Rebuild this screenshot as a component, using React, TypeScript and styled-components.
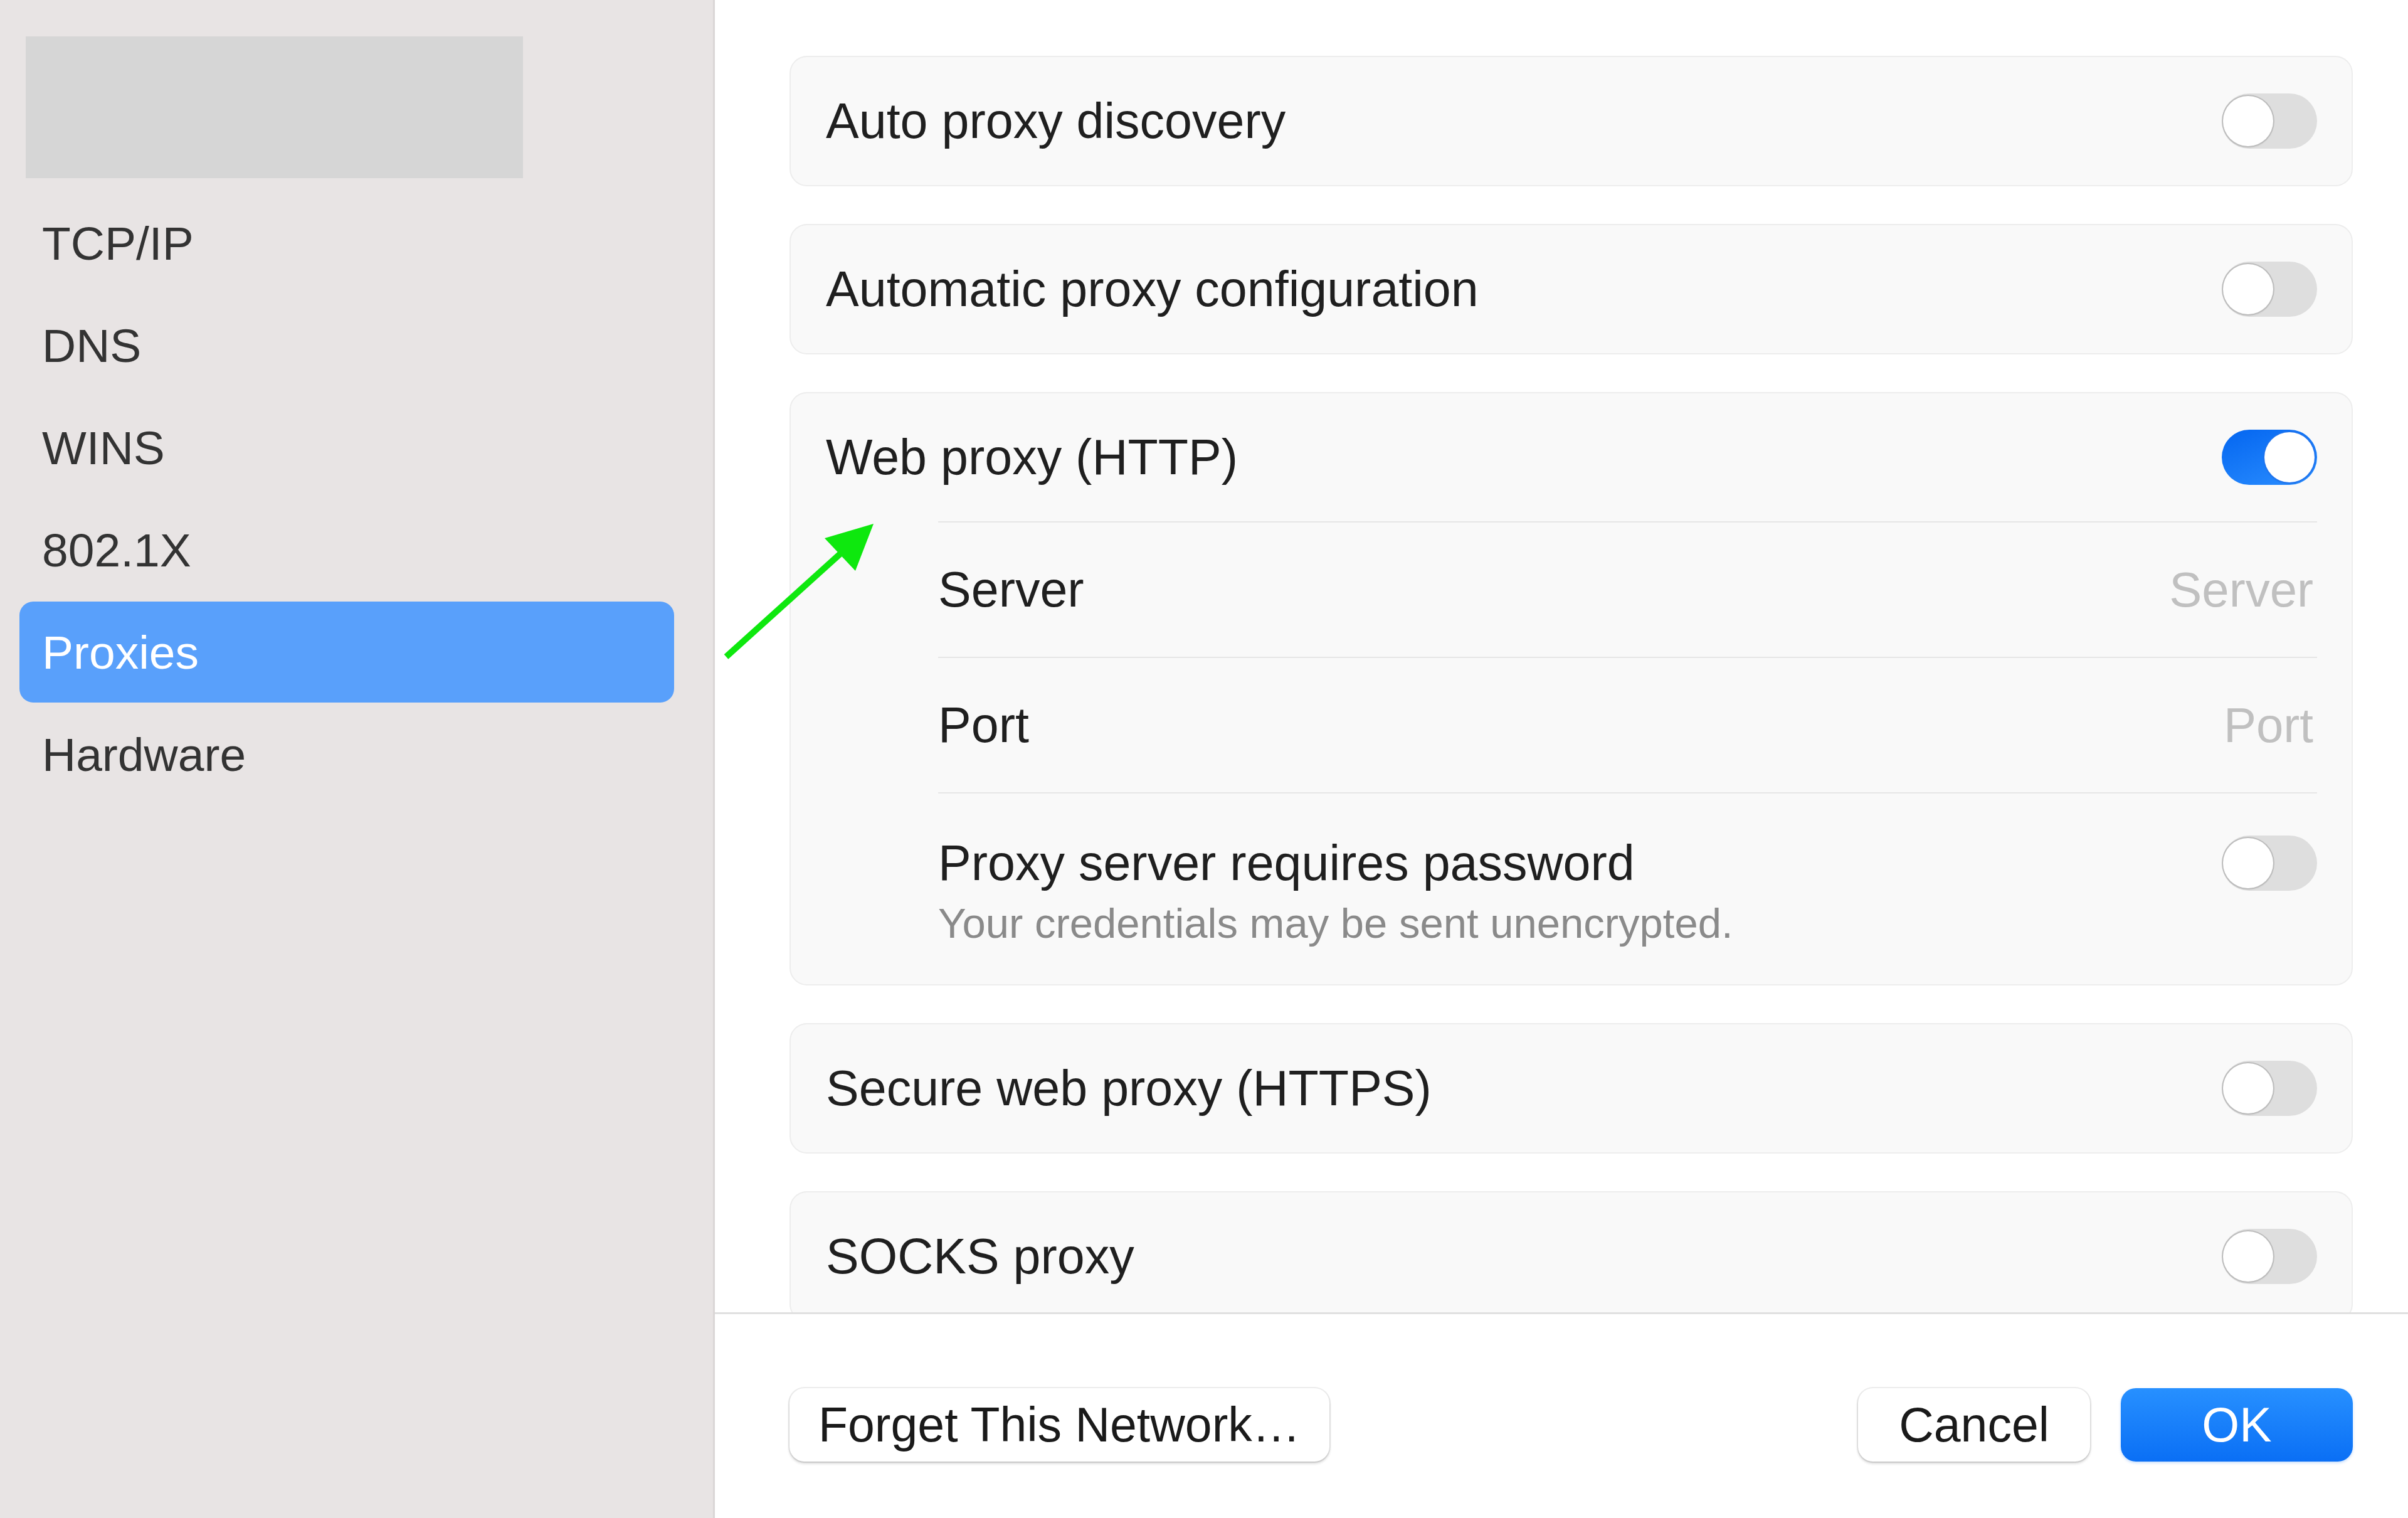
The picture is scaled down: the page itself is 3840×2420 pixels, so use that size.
import { FunctionComponent, ReactNode } from "react";
import styled, { createGlobalStyle } from "styled-components";

const GlobalStyle = createGlobalStyle`
  html, body {
    margin: 0;
    padding: 0;
    background: #ffffff;
  }

  body {
    font-family: "Liberation Sans", Arial, sans-serif;
    -webkit-font-smoothing: antialiased;
  }

  #root {
    height: 100vh;
  }
`;

const Window = styled.div`
  position: relative;
  display: flex;
  height: 100vh;
  overflow: hidden;
`;

/* ---------- sidebar ---------- */

const Sidebar = styled.nav`
  width: 1137px;
  flex-shrink: 0;
  background: #e8e4e4;
  border-right: 3px solid #dad6d6;
  padding-top: 58px;
  box-sizing: content-box;
`;

const NetworkBadge = styled.div`
  width: 793px;
  height: 226px;
  margin: 0 0 23px 41px;
  background: #d6d6d6;
`;

const NavItem = styled.div<{ $active?: boolean }>`
  height: 161px;
  margin: 0 62px 2px 31px;
  padding-left: 36px;
  display: flex;
  align-items: center;
  border-radius: 22px;
  font-size: 75px;
  color: ${p => (p.$active ? "#ffffff" : "#333333")};
  background: ${p => (p.$active ? "#59a0fb" : "transparent")};
`;

/* ---------- main panel ---------- */

const Main = styled.main`
  flex: 1;
  display: flex;
  flex-direction: column;
  min-width: 0;
  background: #ffffff;
`;

const Scroller = styled.div`
  flex: 1;
  overflow: hidden;
  padding: 89px 88px 0 119px;
  display: flex;
  flex-direction: column;
  gap: 60px;
`;

const Card = styled.section`
  flex-shrink: 0;
  background: #f9f9f9;
  border: 2px solid #ededed;
  border-radius: 28px;
  padding: 0 55px 0 56px;
`;

const Row = styled.div`
  height: 204px;
  display: flex;
  align-items: center;
  justify-content: space-between;
`;

// rows nested under an enabled proxy, each with a hairline above
const FieldLine = styled.div`
  height: 214px;
  margin-left: 179px;
  display: flex;
  align-items: center;
  justify-content: space-between;
  border-top: 2px solid #e6e6e6;
`;

const TallRow = styled.div`
  display: flex;
  align-items: flex-start;
  justify-content: space-between;
  margin-left: 179px;
  padding: 64px 0 57px;
  border-top: 2px solid #e6e6e6;
`;

const Label = styled.div`
  font-size: 79px;
  line-height: 94px;
  color: #1f1f1f;
  white-space: nowrap;
`;

const Hint = styled.div`
  margin-top: 9px;
  font-size: 67px;
  line-height: 80px;
  color: #8a8a8a;
`;

const Placeholder = styled.span`
  font-size: 78px;
  color: #c0c0c0;
  margin-right: 6px;
`;

const Track = styled.div<{ $on?: boolean }>`
  position: relative;
  flex-shrink: 0;
  width: 152px;
  height: 88px;
  border-radius: 44px;
  background: ${p =>
    p.$on ? "linear-gradient(160deg, #0466f0 0%, #2a8dff 100%)" : "#dedede"};
`;

const Knob = styled.div<{ $on?: boolean }>`
  position: absolute;
  top: 4px;
  left: ${p => (p.$on ? "68px" : "2px")};
  width: 80px;
  height: 80px;
  border-radius: 50%;
  background: #ffffff;
  box-shadow: 0 0 0 2px ${p => (p.$on ? "#1f74ee" : "#bcbcbc")},
    0 2px 3px rgba(0, 0, 0, 0.12);
`;

const ToggleSlot = styled.div`
  padding-top: 3px;
`;

const Footer = styled.footer`
  height: 328px;
  flex-shrink: 0;
  box-sizing: border-box;
  border-top: 3px solid #e0e0e0;
  padding: 118px 88px 0 119px;
  display: flex;
  justify-content: space-between;
  align-items: flex-start;
`;

const ButtonGroup = styled.div`
  display: flex;
  gap: 49px;
`;

const Button = styled.button<{ $primary?: boolean }>`
  height: 117px;
  min-width: 370px;
  padding: 0 46px;
  border: none;
  border-radius: 24px;
  font-family: "Liberation Sans", Arial, sans-serif;
  font-size: 77px;
  color: ${p => (p.$primary ? "#ffffff" : "#1a1a1a")};
  background: ${p =>
    p.$primary ? "linear-gradient(180deg, #2790ff 0%, #0a6ff5 100%)" : "#ffffff"};
  box-shadow: ${p =>
    p.$primary
      ? "0 2px 4px rgba(10, 111, 245, 0.25)"
      : "0 0 0 2px rgba(0, 0, 0, 0.07), 0 3px 4px rgba(0, 0, 0, 0.18)"};
`;

const Pointer = styled.svg`
  position: absolute;
  left: 1150px;
  top: 825px;
  width: 255px;
  height: 230px;
  pointer-events: none;
`;

/* ---------- pieces ---------- */

const Toggle: FunctionComponent<{ on?: boolean }> = ({ on = false }) => (
  <Track $on={on}>
    <Knob $on={on} />
  </Track>
);

const SimpleCard: FunctionComponent<{ title: string; on?: boolean }> = ({ title, on }) => (
  <Card>
    <Row>
      <Label>{title}</Label>
      <Toggle on={on} />
    </Row>
  </Card>
);

const FieldRow: FunctionComponent<{ label: string; children: ReactNode }> = ({ label, children }) => (
  <FieldLine>
    <Label>{label}</Label>
    {children}
  </FieldLine>
);

const navItems = ["TCP/IP", "DNS", "WINS", "802.1X", "Proxies", "Hardware"];

export default function App() {
  return (
    <>
      <GlobalStyle />
      <Window>
        <Sidebar>
          <NetworkBadge />
          {navItems.map(item => (
            <NavItem key={item} $active={item === "Proxies"}>
              {item}
            </NavItem>
          ))}
        </Sidebar>

        <Main>
          <Scroller>
            <SimpleCard title="Auto proxy discovery" />
            <SimpleCard title="Automatic proxy configuration" />

            <Card>
              <Row>
                <Label>Web proxy (HTTP)</Label>
                <Toggle on />
              </Row>
              <FieldRow label="Server">
                <Placeholder>Server</Placeholder>
              </FieldRow>
              <FieldRow label="Port">
                <Placeholder>Port</Placeholder>
              </FieldRow>
              <TallRow>
                <div>
                  <Label>Proxy server requires password</Label>
                  <Hint>Your credentials may be sent unencrypted.</Hint>
                </div>
                <ToggleSlot>
                  <Toggle />
                </ToggleSlot>
              </TallRow>
            </Card>

            <SimpleCard title="Secure web proxy (HTTPS)" />
            <SimpleCard title="SOCKS proxy" />
          </Scroller>

          <Footer>
            <Button>Forget This Network…</Button>
            <ButtonGroup>
              <Button>Cancel</Button>
              <Button $primary>OK</Button>
            </ButtonGroup>
          </Footer>
        </Main>

        <Pointer viewBox="0 0 255 230">
          <line x1="8" y1="222" x2="192" y2="56" stroke="#0ee80e" strokeWidth="10" />
          <polygon points="243,10 165,33 214,85" fill="#0ee80e" />
        </Pointer>
      </Window>
    </>
  );
}
